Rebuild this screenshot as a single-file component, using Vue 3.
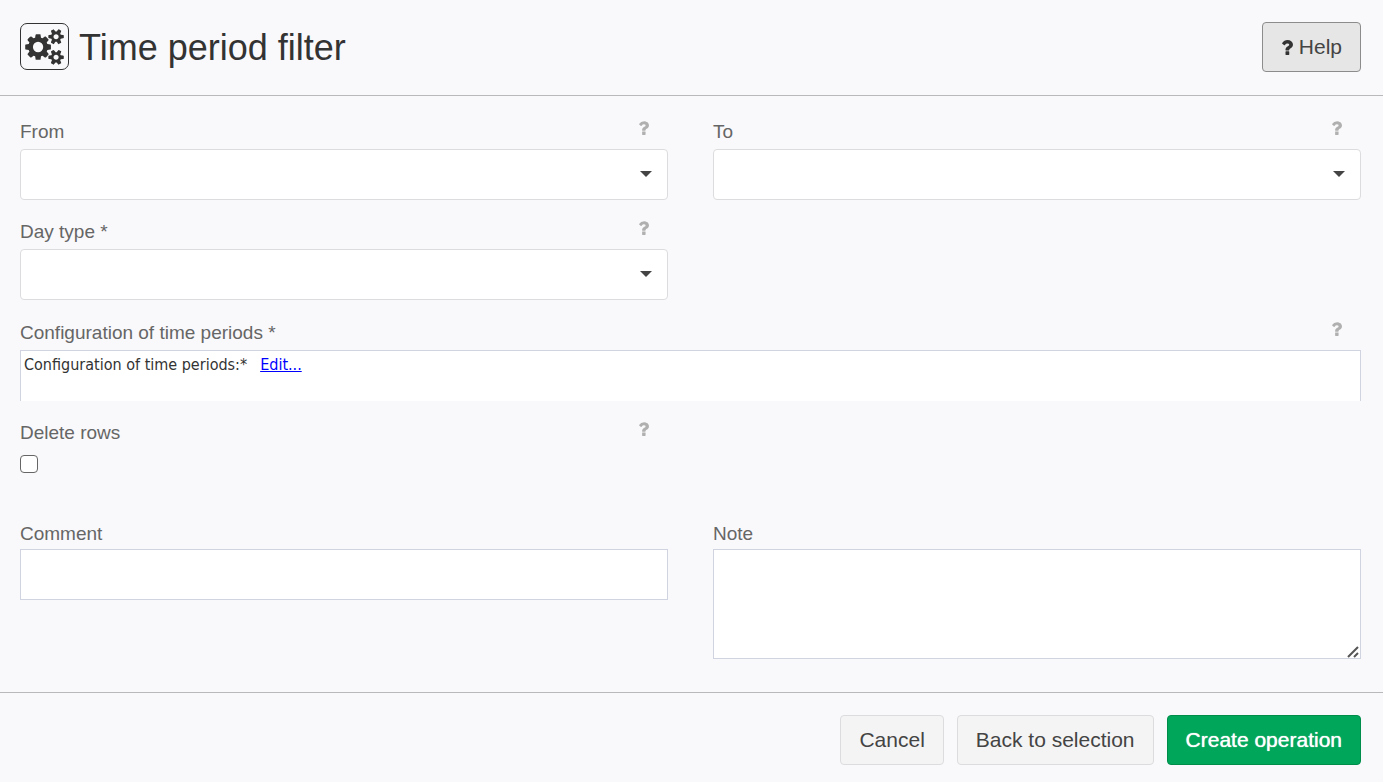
<script setup>
import { reactive } from 'vue'

const form = reactive({ from: '', to: '', dayType: '', deleteRows: false, comment: '', note: '' })

const selects = [
  { key: 'from', label: 'From' },
  { key: 'to', label: 'To' },
  { key: 'dayType', label: 'Day type *' },
]

const questionPath =
  'M1088 1256v240q0 16-12 28t-28 12h-240q-16 0-28-12t-12-28v-240q0-16 12-28t28-12h240q16 0 28 12t12 28zm316-600q0 54-15.5 101t-35 76.5-55 59.5-57.5 43.5-61 35.5q-41 23-68.5 65t-27.5 67q0 17-12 32.5t-28 15.5h-240q-15 0-25.5-18.5t-10.5-37.5v-45q0-83 65-156.5t143-108.5q59-27 84-56t25-76q0-42-46.5-74t-107.5-32q-65 0-108 29-35 25-107 115-13 16-31 16-12 0-25-8l-164-125q-13-10-15.5-25t5.5-28q160-266 464-266 80 0 161 31t146 83 106 127.5 41 158.5z'
</script>

<template>
  <form class="page" @submit.prevent>
    <header class="header">
      <span class="logo">
        <svg viewBox="0 0 1920 1792" aria-hidden="true">
          <path
            d="M896 896q0-106-75-181t-181-75-181 75-75 181 75 181 181 75 181-75 75-181zm768 512q0-52-38-90t-90-38-90 38-38 90q0 53 37.5 90.5t90.5 37.5 90.5-37.5 37.5-90.5zm0-1024q0-52-38-90t-90-38-90 38-38 90q0 53 37.5 90.5t90.5 37.5 90.5-37.5 37.5-90.5zm-384 421v185q0 10-7 19.5t-16 10.5l-155 24q-11 35-32 76 34 48 90 115 7 11 7 20 0 12-7 19-23 30-82.5 89.5t-78.5 59.5q-11 0-21-7l-115-90q-37 19-77 31-11 108-23 155-7 24-30 24h-186q-11 0-20-7.5t-10-17.5l-23-153q-34-10-75-31l-118 89q-7 7-20 7-11 0-21-8-144-133-144-160 0-9 7-19 10-14 41-53t47-61q-23-44-35-82l-152-24q-10-1-17-9.5t-7-19.5v-185q0-10 7-19.5t16-10.5l155-24q11-35 32-76-34-48-90-115-7-11-7-20 0-12 7-20 22-30 82-89t79-59q11 0 21 7l115 90q34-18 77-32 11-108 23-154 7-24 30-24h186q11 0 20 7.5t10 17.5l23 153q34 10 75 31l118-89q8-7 20-7 11 0 21 8 144 133 144 160 0 8-7 19-12 16-42 54t-45 60q23 48 34 82l152 23q10 2 17 10.5t7 19.5zm640 533v140q0 16-149 31-12 27-30 52 51 113 51 138 0 4-4 7-122 71-124 71-8 0-46-47t-52-68q-20 2-30 2t-30-2q-14 21-52 68t-46 47q-2 0-124-71-4-3-4-7 0-25 51-138-18-25-30-52-149-15-149-31v-140q0-16 149-31 13-29 30-52-51-113-51-138 0-4 4-7 4-2 35-20t59-34 30-16q8 0 46 46.5t52 67.5q20-2 30-2t30 2q51-71 92-112l6-2q4 0 124 70 4 3 4 7 0 25-51 138 17 23 30 52 149 15 149 31zm0-1024v140q0 16-149 31-12 27-30 52 51 113 51 138 0 4-4 7-122 71-124 71-8 0-46-47t-52-68q-20 2-30 2t-30-2q-14 21-52 68t-46 47q-2 0-124-71-4-3-4-7 0-25 51-138-18-25-30-52-149-15-149-31v-140q0-16 149-31 13-29 30-52-51-113-51-138 0-4 4-7 4-2 35-20t59-34 30-16q8 0 46 46.5t52 67.5q20-2 30-2t30 2q51-71 92-112l6-2q4 0 124 70 4 3 4 7 0 25-51 138 17 23 30 52 149 15 149 31z"
          />
        </svg>
      </span>
      <h1>Time period filter</h1>
      <button type="button" class="btn help">
        <svg class="question" viewBox="384 256 1024 1280" aria-hidden="true"><path :d="questionPath" /></svg>
        Help
      </button>
    </header>

    <main class="fields">
      <div v-for="s in selects" :key="s.key" class="field">
        <div class="label-row">
          <label :for="s.key">{{ s.label }}</label>
          <button type="button" class="hint" :aria-label="'Help: ' + s.label">
            <svg class="question" viewBox="384 256 1024 1280" aria-hidden="true"><path :d="questionPath" /></svg>
          </button>
        </div>
        <div class="select-wrap">
          <select :id="s.key" v-model="form[s.key]">
            <option value=""></option>
          </select>
          <svg class="caret" viewBox="0 0 12 6" aria-hidden="true"><path d="M0 0h12L6 6z" /></svg>
        </div>
      </div>

      <div class="field wide">
        <div class="label-row">
          <span class="label">Configuration of time periods *</span>
          <button type="button" class="hint" aria-label="Help: Configuration of time periods">
            <svg class="question" viewBox="384 256 1024 1280" aria-hidden="true"><path :d="questionPath" /></svg>
          </button>
        </div>
        <div class="config">
          <span>Configuration of time periods:*</span>
          <a href="#edit">Edit...</a>
        </div>
      </div>

      <div class="field wide-start">
        <div class="label-row">
          <label for="deleteRows">Delete rows</label>
          <button type="button" class="hint" aria-label="Help: Delete rows">
            <svg class="question" viewBox="384 256 1024 1280" aria-hidden="true"><path :d="questionPath" /></svg>
          </button>
        </div>
        <div class="check-area">
          <input id="deleteRows" v-model="form.deleteRows" type="checkbox" />
        </div>
      </div>

      <div class="field wide-start">
        <div class="label-row low"><label for="comment">Comment</label></div>
        <input id="comment" v-model="form.comment" class="text" type="text" />
      </div>
      <div class="field">
        <div class="label-row low"><label for="note">Note</label></div>
        <div class="note-wrap">
          <textarea id="note" v-model="form.note" class="text"></textarea>
          <svg class="grip" viewBox="0 0 12 12" aria-hidden="true"><path d="M1 11L11 1M7 11l4-4" /></svg>
        </div>
      </div>
    </main>

    <footer class="footer">
      <button type="button" class="btn">Cancel</button>
      <button type="button" class="btn">Back to selection</button>
      <button type="submit" class="btn primary">Create operation</button>
    </footer>
  </form>
</template>

<style>
body {
  background: #f9f9fb;
}
</style>

<style scoped>
.page,
.page * {
  box-sizing: border-box;
}
.page {
  font-family: 'Liberation Sans', Arial, sans-serif;
  color: #333;
}
.header {
  display: flex;
  align-items: center;
  padding: 22px 22px 23px 20px;
  border-bottom: 1px solid #b9b9bb;
}
.logo {
  display: flex;
  align-items: center;
  justify-content: center;
  width: 49px;
  height: 47px;
  margin-bottom: 1px;
  border: 1px solid #333;
  border-radius: 7px;
}
.logo svg {
  width: 39px;
  height: 36px;
  fill: #333;
}
h1 {
  flex: 1;
  margin: 0 0 0 10px;
  padding-top: 2px;
  font-size: 36px;
  font-weight: 400;
  line-height: 48px;
}
.btn {
  height: 50px;
  padding: 0 18px;
  border: 1px solid #dcdcde;
  border-radius: 4px;
  background: #f4f4f4;
  color: #444;
  font-family: inherit;
  font-size: 21px;
  line-height: 24px;
  cursor: pointer;
}
.help {
  display: flex;
  align-items: center;
  gap: 6px;
  background: #e6e6e6;
  border-color: #8c8c8c;
}
.question {
  display: block;
  width: 11px;
  height: 14px;
  fill: #333;
}
.help .question {
  width: 12px;
  height: 15px;
}
.fields {
  display: grid;
  grid-template-columns: 1fr 1fr;
  column-gap: 45px;
  row-gap: 19px;
  align-items: start;
  padding: 23px 22px 33px 20px;
}
.wide {
  grid-column: 1 / -1;
  padding-top: 1px;
}
.wide-start {
  grid-column: 1;
}
.label-row {
  display: flex;
  justify-content: space-between;
  align-items: flex-start;
  height: 30px;
  padding-right: 19px;
  color: #666;
  font-size: 19px;
  line-height: 26px;
}
.low {
  padding-top: 2px;
}
.hint {
  padding: 2px 0;
  border: 0;
  background: none;
  cursor: pointer;
}
.hint .question {
  fill: #b0b0b0;
}
.select-wrap,
.note-wrap {
  position: relative;
}
select {
  display: block;
  width: 100%;
  height: 51px;
  padding: 0 40px 0 12px;
  appearance: none;
  border: 1px solid #dcdcde;
  border-radius: 4px;
  background: #fff;
  color: #444;
  font: inherit;
}
.caret {
  position: absolute;
  top: 22px;
  right: 16px;
  width: 12px;
  height: 6px;
  fill: #444;
  pointer-events: none;
}
.config {
  display: flex;
  gap: 13px;
  height: 51px;
  padding: 3px;
  border: 1px solid #d0d3e0;
  border-bottom: 0;
  background: #fff;
  font-family: Tahoma, 'DejaVu Sans Condensed', 'Noto Sans', sans-serif;
  font-size: 16px;
  line-height: 22px;
}
.config a {
  color: #00f;
}
.check-area {
  height: 50px;
  padding-top: 5px;
}
input[type='checkbox'] {
  display: block;
  width: 18px;
  height: 18px;
  margin: 0;
  appearance: none;
  border: 1px solid #666;
  border-radius: 4px;
  background: #fff;
}
input[type='checkbox']:checked {
  background: #00a65a;
}
.text {
  display: block;
  width: 100%;
  height: 51px;
  padding: 8px 12px;
  border: 1px solid #d0d3e0;
  border-radius: 0;
  background: #fff;
  color: #444;
  font: inherit;
}
textarea.text {
  height: 110px;
  resize: vertical;
}
textarea::-webkit-resizer {
  background: transparent;
}
.grip {
  position: absolute;
  right: 2px;
  bottom: 1px;
  width: 12px;
  height: 12px;
  fill: none;
  stroke: #555;
  stroke-width: 2;
  pointer-events: none;
}
.footer {
  display: flex;
  justify-content: flex-end;
  gap: 13px;
  padding: 22px 22px 17px;
  border-top: 1px solid #b9b9bb;
}
.primary {
  border-color: #008d4c;
  background: #00a65a;
  color: #fff;
  text-shadow: 0 0 1px #fff;
}
</style>
